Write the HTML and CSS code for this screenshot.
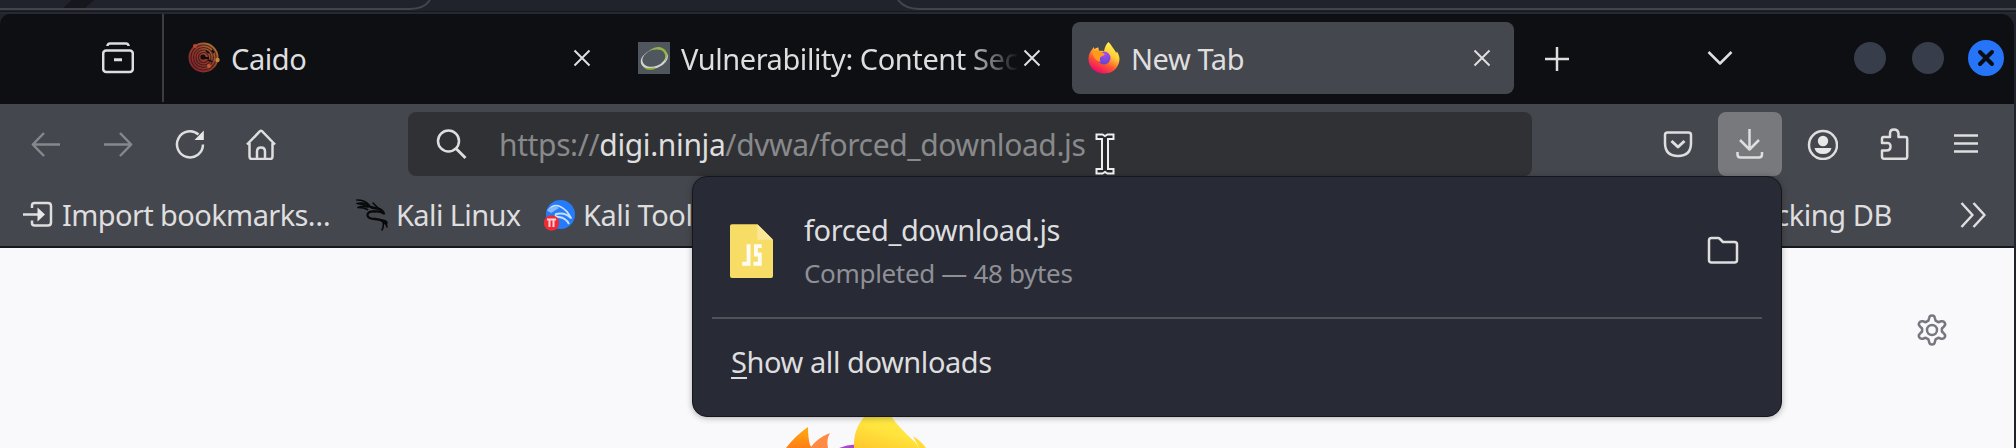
FILE: index.html
```html
<!DOCTYPE html>
<html lang="en">
<head>
<meta charset="utf-8">
<title>New Tab</title>
<link rel="stylesheet" href="styles.css">
</head>
<body>
<div class="desktop">
  <svg class="backdrop" viewBox="0 0 2016 14" width="2016" height="14">
    <path d="M72 0H94L85 8H63z" fill="#15171d"/>
    <path d="M0 9H410Q424 9 430 0M898 0Q905 9 919 9H2016" fill="none" stroke="#43454b" stroke-width="2"/>
    <path d="M0 11.5H2016" stroke="#17181c"/>
    <path d="M0 13H2016" stroke="#262834" stroke-width="2"/>
  </svg>
  <div class="window">
    <header class="tabbar">
      <div class="view"><svg class="icon" viewBox="0 0 32 32"><path d="M5.500 4V3.500Q6 1.500 8 1.500H24Q26 1.500 26.500 3.500V4"/><rect x="1.200" y="8.500" width="29.600" height="21.500" rx="3"/><path d="M12 17.800H20" stroke-width="3"/></svg></div>
      <div class="tab">
        <svg class="icon" viewBox="0 0 32 32">
          <defs><linearGradient id="cg" x1="0" y1="1" x2="1" y2="0"><stop offset="0" stop-color="#84202a"/><stop offset=".5" stop-color="#94382b"/><stop offset="1" stop-color="#b98438"/></linearGradient></defs>
          <circle cx="15.500" cy="15.500" r="15" fill="url(#cg)" stroke="none"/>
          <g fill="none" stroke="#2a1417" stroke-width="1.100" stroke-opacity=".75"><circle cx="15.500" cy="15.500" r="12.500"/><circle cx="15.500" cy="15.500" r="10"/><circle cx="15.500" cy="15.500" r="7.500"/><circle cx="15.500" cy="15.500" r="5"/></g>
          <g stroke="none"><circle cx="7" cy="4" r="2" fill="#bd452f"/><circle cx="29.500" cy="18" r="2.200" fill="#c98635"/><circle cx="21" cy="24" r="2" fill="#bd5a31"/><circle cx="15" cy="15" r="2.600" fill="#150e11"/><path d="M18 9L21 11M20 18L24 19.500M24 8L26 11M17 16H21" stroke="#150e11" stroke-width="1.800"/></g>
        </svg>
        <span class="label">Caido</span>
        <svg class="close" viewBox="0 0 18 18"><path d="M1.500 1.500L16.500 16.500M16.500 1.500L1.500 16.500"/></svg>
      </div>
      <div class="tab">
        <svg class="icon" viewBox="0 0 32 32"><rect width="32" height="32" fill="#50565d" stroke="none"/><g transform="rotate(-20 16 16)" stroke="none"><path fill-rule="evenodd" fill="#d3d5d4" d="M2 17a14 9.500 0 1 0 28 0a14 9.500 0 1 0-28 0zM4 16a12 8.300 0 1 0 24 0a12 8.300 0 1 0-24 0z"/><path d="M13 7.500Q26 4 29.500 13Q31 19 24 24Q30 17 26 11.500Q22 7 13 7.500z" fill="#92b43a"/><path d="M2.500 20Q5 26.500 13 26.500L14 25Q7 24.500 2.500 20z" fill="#92b43a"/></g></svg>
        <span class="label faded">Vulnerability: Content Sec</span>
        <svg class="close" viewBox="0 0 18 18"><path d="M1.500 1.500L16.500 16.500M16.500 1.500L1.500 16.500"/></svg>
      </div>
      <div class="tab active">
        <svg class="icon" viewBox="0 0 32 32">
          <defs><linearGradient id="ff" x1=".85" y1=".1" x2=".35" y2="1"><stop offset="0" stop-color="#fff44f"/><stop offset=".35" stop-color="#ffc937"/><stop offset=".65" stop-color="#ff5a30"/><stop offset="1" stop-color="#f0076b"/></linearGradient><radialGradient id="fp" cx=".6" cy=".2" r=".9"><stop offset="0" stop-color="#a84bf2"/><stop offset="1" stop-color="#5a45c8"/></radialGradient></defs>
          <g stroke="none"><path fill="url(#ff)" d="M20.500 0C23 2 24 5 26.500 8Q28 10 28 11L29 9.500C31 13 32 16 31.300 19C30 27 24 31.500 16 31.500C7 31.500.5 25 .5 17C.5 12 2.500 9 4.500 7L5.500 5L6.500 7Q9 5 10.500 5.500Q10 7 11.500 9Q14 8.500 16 9C17 5 18 2 20.500 0z"/>
          <circle cx="16" cy="16" r="6.500" fill="url(#fp)"/><path d="M4 11Q8 7 11.500 9L17 12Q16 14 12.500 15Q11 18 13 20Q8 19 6 15z" fill="#ff9a1f"/></g>
        </svg>
        <span class="label">New Tab</span>
        <svg class="close" viewBox="0 0 18 18"><path d="M1.500 1.500L16.500 16.500M16.500 1.500L1.500 16.500"/></svg>
      </div>
      <svg class="plus" viewBox="0 0 26 26"><path d="M13 1V25M1 13H25"/></svg>
      <svg class="alltabs" viewBox="0 0 26 16"><path d="M1.500 2L13 13.500L24.500 2"/></svg>
      <div class="controls">
        <span class="dot"></span><span class="dot"></span>
        <span class="quit"><svg viewBox="0 0 18 18"><path d="M3 3L15 15M15 3L3 15"/></svg></span>
      </div>
    </header>
    <nav class="toolbar">
      <div class="cell dim"><svg class="icon" viewBox="0 0 32 32"><path d="M30 16.500H3M14 5L2.800 16.500L14 28"/></svg></div>
      <div class="cell dim"><svg class="icon" viewBox="0 0 32 32"><path d="M2 16.500H29M18 5L29.200 16.500L18 28"/></svg></div>
      <div class="cell"><svg class="icon" viewBox="0 0 32 32"><path d="M24.500 6.500A13 13 0 1 0 29 16.500"/><path d="M29.800 2.500V12H20.500z" class="fill"/></svg></div>
      <div class="cell"><svg class="icon" viewBox="0 0 32 32"><path d="M1 16.500L14 3.200Q15 2.200 16 3.200L29 16.500M3.500 15V28.500Q3.500 31 6 31H24Q26.500 31 26.500 28.500V15M11 31V23.500Q11 19.500 15 19.500T19 23.500V31"/></svg></div>
      <div class="urlbar">
        <svg class="icon" viewBox="0 0 32 32"><circle cx="12.500" cy="13" r="10.500"/><path d="M20 20.500L29.500 30" stroke-width="2.800"/></svg>
        <span class="url">https://<b>digi.ninja</b>/dvwa/forced_download.js</span>
      </div>
      <div class="cell first"><svg class="icon" viewBox="0 0 32 32"><path d="M5.500 4.500H26.500Q29 4.500 29 7V15Q29 28 16 28T3 15V7Q3 4.500 5.500 4.500z"/><path d="M9.500 13L16 19L22.500 13" stroke-width="3"/></svg></div>
      <div class="cell"><span class="pressed"><svg class="icon" viewBox="0 0 32 32"><path d="M15.500 1V21M6 12L15.500 21.500L25 12M3.500 24V26.500Q3.500 29.500 6.500 29.500H25Q28 29.500 28 26.500V24"/></svg></span></div>
      <div class="cell"><svg class="icon" viewBox="0 0 32 32"><circle cx="17" cy="17" r="14"/><circle cx="17" cy="13" r="5.200" class="fill"/><path class="fill" d="M8.500 20H25.500Q24 26 17 26T8.500 20z"/></svg></div>
      <div class="cell"><svg class="icon" viewBox="0 0 32 32"><path d="M5.500 9H12V5.500Q12 1.500 16 1.500T20.500 5.500V9H27.500Q29.200 9 29.200 11V28.500Q29.200 30.700 27.500 30.700H6Q4 30.700 4 28.500V22.500H8.500Q12.500 22.500 12.500 18.500T8.500 15H4V11Q4 9 5.500 9z"/></svg></div>
      <div class="cell"><svg class="icon" viewBox="0 0 32 32"><path d="M4 7.500H28M4 15.500H28M4 23.500H28"/></svg></div>
    </nav>
    <div class="bookmarks">
      <svg class="icon import" viewBox="0 0 32 32"><path d="M10 9V6.500Q10 4 12.500 4H26Q29 4 29 7V23.500Q29 26.500 26 26.500H12.500Q10 26.500 10 24V21.500M1 15.500H18"/><path class="fill" d="M15.500 8.500L23 15.500L15.500 22.500z"/></svg>
      <span class="bm bm-import">Import bookmarks…</span>
      <svg class="icon" viewBox="0 0 32 32"><g fill="none" stroke="#08090b" stroke-linecap="round"><path d="M.8 1C6 1 10 2 13 6Q9 3.500 1 4.500Q7 5 12 8Q7 6.500 2 8.500Q8 8.500 11.500 10.500" stroke-width="1.700"/><path d="M11 6Q16 9.500 21 9.500Q26 10 28 14.500Q24 12 19 12.500Q11 12 11.500 16.500Q12.500 20 19 20Q28 21 30 25" stroke-width="2.300"/><path d="M17 4L22 9M26 22Q31 25 31 28M27 23Q28 27 26 31M25 21Q31 21 31 24" stroke-width="1.600"/></g></svg>
      <span class="bm bm-linux">Kali Linux</span>
      <svg class="icon" viewBox="0 0 32 32"><g stroke="none"><circle cx="17.500" cy="15.500" r="14.500" fill="#257cfa"/><path d="M5 12Q10 4 18 8Q24 11 28 19Q22 13 13 15Q11 18 16 18Q23 19 26 25" fill="none" stroke="#c8dfff" stroke-width="1.800"/><path d="M4 11Q12 5 16 9L8 14z" fill="#85b8ff"/><circle cx="8.500" cy="24" r="7.700" fill="#ed2c37"/><path d="M4 20.500H13M6.500 20.500V28M10.500 20.500V28" stroke="#ffd5d5" stroke-width="2"/></g></svg>
      <span class="bm">Kali Tools</span>
      <span class="bm bm-last">Google Hacking DB</span>
      <svg class="more" viewBox="0 0 26 26"><path d="M1.500 1L12.500 13L1.500 25M13.500 1L24.500 13L13.500 25"/></svg>
    </div>
    <main class="page">
      <svg class="logo" viewBox="0 0 160 32" width="160" height="32">
        <defs><linearGradient id="o" x1="0" y1="0" x2="0" y2="1"><stop offset="0" stop-color="#ffac0c"/><stop offset="1" stop-color="#ff7f18"/></linearGradient><linearGradient id="y" x1="0" y1="1" x2=".6" y2="0"><stop offset="0" stop-color="#ffc62b"/><stop offset=".6" stop-color="#ffe43d"/><stop offset="1" stop-color="#ffe948"/></linearGradient></defs>
        <path d="M1 32Q10 20 23 11Q23 22 25 29L27 32z" fill="url(#o)"/>
        <path d="M25 32Q32 22 45 17Q41 24 43 32z" fill="#ff8a42"/>
        <path d="M54 32Q70 25 86 32z" fill="#a947cc"/>
        <path d="M69 32Q68 13 80 0H106Q113 11 130 26L134 32z" fill="url(#y)"/>
        <path d="M128 20Q136 25 141 32H134Q131 26 128 20z" fill="#ffdc35"/>
      </svg>
      <svg class="gear" viewBox="0 0 32 32"><path d="M13.200 3.700Q13.700 1.400 16 1.400T18.800 3.700L19.600 6.700L22.200 8.200L25.200 7.300Q27.500 6.700 28.700 8.700T28.100 12.300L25.900 14.500V17.500L28.100 19.700Q29.900 21.300 28.700 23.300T25.200 24.700L22.200 23.800L19.600 25.300L18.800 28.300Q18.300 30.600 16 30.600T13.200 28.300L12.400 25.300L9.800 23.800L6.800 24.700Q4.500 25.300 3.300 23.300T3.900 19.700L6.100 17.500V14.500L3.900 12.300Q2.100 10.700 3.300 8.700T6.800 7.300L9.800 8.200L12.400 6.700z"/><circle cx="16" cy="16" r="5"/></svg>
    </main>
  </div>
  <section class="panel">
    <div class="download">
      <svg class="file" viewBox="0 0 44 56"><path d="M2 0H28L44 16V53Q44 55 42 55H2Q0 55 0 53V2Q0 0 2 0z" fill="#f7dc66"/><path d="M28 0L44 16H28z" fill="#fae797"/><path d="M17 22.500H19V40.500H12.500M32.500 22.500H26.500V31H30.500V40.500H24" fill="none" stroke="#fffdf3" stroke-width="4"/></svg>
      <div class="info"><span class="name">forced_download.js</span><span class="status">Completed — 48 bytes</span></div>
      <svg class="icon folder" viewBox="0 0 32 32"><path d="M4.500 4H11Q12 4 13 5L16 8H27.500Q30 8 30 10.500V26Q30 28.500 27.500 28.500H4.500Q2 28.500 2 26V6.500Q2 4 4.500 4z"/></svg>
    </div>
    <div class="all"><span class="key">S</span>how all downloads</div>
  </section>
  <svg class="cursor" viewBox="0 0 20 42"><path d="M1.500 1.500H7.500L10 3L12.500 1.500H18.500V6H13V36H18.500V40.500H12.500L10 39L7.500 40.500H1.500V36H7V6H1.500z"/></svg>
</div>
</body>
</html>
```

FILE: styles.css
```css
* { box-sizing: border-box; }
body { margin: 0; background: #20232c; }
svg { display: block; flex: none; }
.desktop {
  position: relative; width: 2016px; height: 448px; overflow: hidden;
  display: flex; flex-direction: column;
  background: #20232c; color: #dededf;
  font: 29px/40px "Noto Sans", "Open Sans", sans-serif;
  letter-spacing: -0.43px; white-space: nowrap;
}
.window {
  width: 2015px; flex: 1; display: flex; flex-direction: column;
  border-right: 1px solid #22242c; border-radius: 10px 14px 0 0; overflow: hidden;
}
.icon { width: 32px; height: 32px; }
.icon, .close, .plus, .alltabs, .more, .gear {
  fill: none; stroke: #dededf; stroke-width: 2.5; stroke-linejoin: round;
}
.fill { fill: #e8e8e8; stroke: none; }

.tabbar { height: 90px; display: flex; background: #0e0f13; align-items: flex-start; }
.view { width: 164px; height: 88px; padding: 28px 0 0 102px; border-right: 2px solid #3c3d41; }
.tab {
  width: 442px; height: 72px; margin: 8px 0 0 8px; padding: 0 23px 0 16px;
  display: flex; align-items: center; border-radius: 8px;
}
.tab.active { background: #45474e; }
.label { flex: 1; min-width: 0; margin-left: 11px; padding-top: 2px; }
.faded { -webkit-mask-image: linear-gradient(90deg, #000 285px, transparent 338px); mask-image: linear-gradient(90deg, #000 285px, transparent 338px); }
.close { width: 18px; height: 18px; stroke-width: 2; }
.plus { width: 26px; height: 26px; margin: 32px 0 0 30px; }
.alltabs { width: 26px; height: 16px; margin: 36px 0 0 137px; }
.controls { display: flex; align-items: center; margin: 26px 0 0 121px; }
.dot { width: 32px; height: 32px; border-radius: 50%; background: #383d4b; margin-right: 26px; }
.quit {
  width: 36px; height: 36px; border-radius: 50%; background: #2674f7; margin-left: -2px;
  display: flex; align-items: center; justify-content: center;
}
.quit svg { width: 18px; height: 18px; fill: none; stroke: #0b0d14; stroke-width: 4; stroke-linecap: round; }

.toolbar { height: 76px; padding: 4px 0 0 10px; display: flex; align-items: center; background: #45474e; }
.cell { width: 72px; height: 64px; flex: none; display: flex; align-items: center; justify-content: center; }
.cell.first { margin-left: 110px; }
.dim .icon { stroke: #87888c; }
.pressed { width: 64px; height: 64px; border-radius: 8px; background: #78797d; display: flex; align-items: center; justify-content: center; }
.urlbar {
  width: 1124px; height: 64px; margin-left: 110px; padding-left: 28px;
  display: flex; align-items: center; border-radius: 8px; background: #303135;
}
.url { margin-left: 31px; padding-top: 2px; font-size: 30px; letter-spacing: -0.38px; color: #88898b; }
.url b { font-weight: 400; color: #dededf; }

.bookmarks { height: 68px; padding: 4px 28px 0 22px; display: flex; align-items: center; background: #45474e; border-bottom: 2px solid #17181d; }
.bm { margin-left: 8px; margin-right: 23px; }
.bm-import { width: 271px; letter-spacing: -0.6px; }
.bm-linux { width: 124px; letter-spacing: -0.6px; }
.bm-last { margin-left: auto; margin-right: 68px; }
.more { width: 26px; height: 26px; }

.page { flex: 1; display: flex; justify-content: space-between; background: #f9f9fb; padding: 66px 66px 0 785px; }
.logo { margin-top: 102px; }
.gear { width: 32px; height: 32px; stroke: #77777f; }

.panel {
  position: absolute; left: 692px; top: 176px; width: 1090px; height: 241px;
  padding: 0 19px; border: 1px solid #15161c; border-radius: 15px;
  background: #282a35; box-shadow: 0 1px 6px rgba(0,0,0,.3);
}
.download { height: 142px; padding: 0 23px 0 18px; display: flex; border-bottom: 2px solid #505159; }
.file { width: 43px; height: 55px; margin-top: 47px; }
.info { display: flex; flex-direction: column; margin: 33px auto 0 31px; }
.status { margin-top: 3px; font-size: 26px; letter-spacing: -0.33px; color: #8f9096; }
.folder { margin-top: 57px; }
.all { padding: 23px 0 0 19px; }
.key { border-bottom: 2px solid #dededf; display: inline-block; line-height: 31px; }
.cursor { position: absolute; left: 1095px; top: 133px; width: 20px; height: 42px; fill: #27282c; stroke: #eee; stroke-width: 2; }
```
